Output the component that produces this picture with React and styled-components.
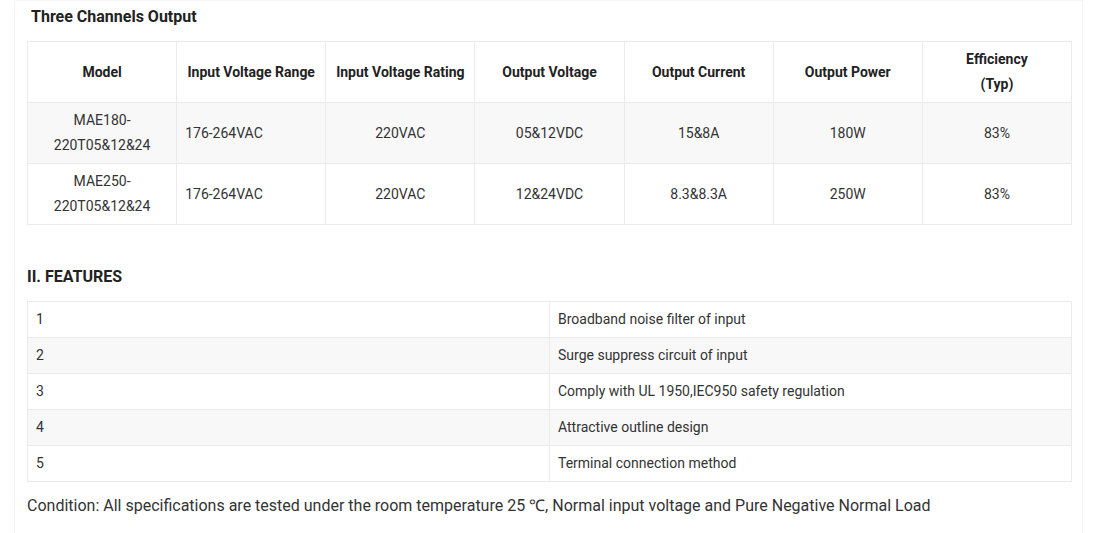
import styled, { createGlobalStyle } from "styled-components";

const GlobalStyle = createGlobalStyle`
  body {
    margin: 0;
    background: #fff;
    font-family: Roboto, "Liberation Sans", Arial, sans-serif;
    color: #333;
  }
`;

const Page = styled.div`
  margin-left: 14px;
  width: 1069px;
  min-height: 533px;
  box-sizing: border-box;
  border-left: 1px solid #f4f4f4;
  border-right: 1px solid #f4f4f4;
  border-top: 1px solid #f7f7f7;
  padding: 6px 12px 0 12px;
`;

const Title = styled.h3`
  margin: 0 0 14px 4px;
  font-size: 16px;
  line-height: 20px;
  font-weight: 700;
  color: #222;
`;

const SectionTitle = styled.h3`
  margin: 40px 0 12px 0;
  font-size: 16px;
  line-height: 24px;
  font-weight: 700;
  color: #222;
`;

const Table = styled.table`
  width: 1045px;
  border-collapse: collapse;
  table-layout: fixed;
  font-size: 14px;
  line-height: 25px;
`;

const Row = styled.tr`
  background: ${(p) => (p.$shade ? "#f8f8f8" : "#fff")};
`;

const HeadCell = styled.th`
  border: 1px solid #ebebeb;
  height: 50px;
  padding: 5px 8px;
  font-weight: 700;
  color: #222;
  text-align: center;
  vertical-align: middle;
`;

const Cell = styled.td`
  border: 1px solid #ebebeb;
  height: 50px;
  padding: 5px 8px;
  color: #333;
  text-align: ${(p) => (p.$left ? "left" : "center")};
  vertical-align: middle;
`;

const FeatureCell = styled.td`
  border: 1px solid #ebebeb;
  height: 35px;
  padding: 0 8px;
  color: #333;
  font-size: 14px;
  text-align: left;
  vertical-align: middle;
`;

const Note = styled.p`
  margin: 12px 0 0 0;
  font-size: 16px;
  line-height: 24px;
  color: #333;
`;

const headers = [
  "Model",
  "Input Voltage Range",
  "Input Voltage Rating",
  "Output Voltage",
  "Output Current",
  "Output Power",
  <>
    Efficiency
    <br />
    (Typ)
  </>,
];

const models = [
  {
    model: ["MAE180-", "220T05&12&24"],
    range: "176-264VAC",
    rating: "220VAC",
    voltage: "05&12VDC",
    current: "15&8A",
    power: "180W",
    eff: "83%",
  },
  {
    model: ["MAE250-", "220T05&12&24"],
    range: "176-264VAC",
    rating: "220VAC",
    voltage: "12&24VDC",
    current: "8.3&8.3A",
    power: "250W",
    eff: "83%",
  },
];

const features = [
  "Broadband noise filter of input",
  "Surge suppress circuit of input",
  "Comply with UL 1950,IEC950 safety regulation",
  "Attractive outline design",
  "Terminal connection method",
];

const App = () => {
  return (
    <>
      <GlobalStyle />
      <Page>
        <Title>Three Channels Output</Title>
        <Table>
          <thead>
            <Row>
              {headers.map((h, i) => (
                <HeadCell key={i}>{h}</HeadCell>
              ))}
            </Row>
          </thead>
          <tbody>
            {models.map((m, i) => (
              <Row key={i} $shade={i % 2 === 0}>
                <Cell>
                  {m.model[0]}
                  <br />
                  {m.model[1]}
                </Cell>
                <Cell $left>{m.range}</Cell>
                <Cell>{m.rating}</Cell>
                <Cell>{m.voltage}</Cell>
                <Cell>{m.current}</Cell>
                <Cell>{m.power}</Cell>
                <Cell>{m.eff}</Cell>
              </Row>
            ))}
          </tbody>
        </Table>

        <SectionTitle>II. FEATURES</SectionTitle>
        <Table>
          <tbody>
            {features.map((f, i) => (
              <Row key={i} $shade={i % 2 === 1}>
                <FeatureCell>{i + 1}</FeatureCell>
                <FeatureCell>{f}</FeatureCell>
              </Row>
            ))}
          </tbody>
        </Table>
        <Note>
          Condition: All specifications are tested under the room temperature
          25 ℃, Normal input voltage and Pure Negative Normal Load
        </Note>
      </Page>
    </>
  );
};

export default App;
